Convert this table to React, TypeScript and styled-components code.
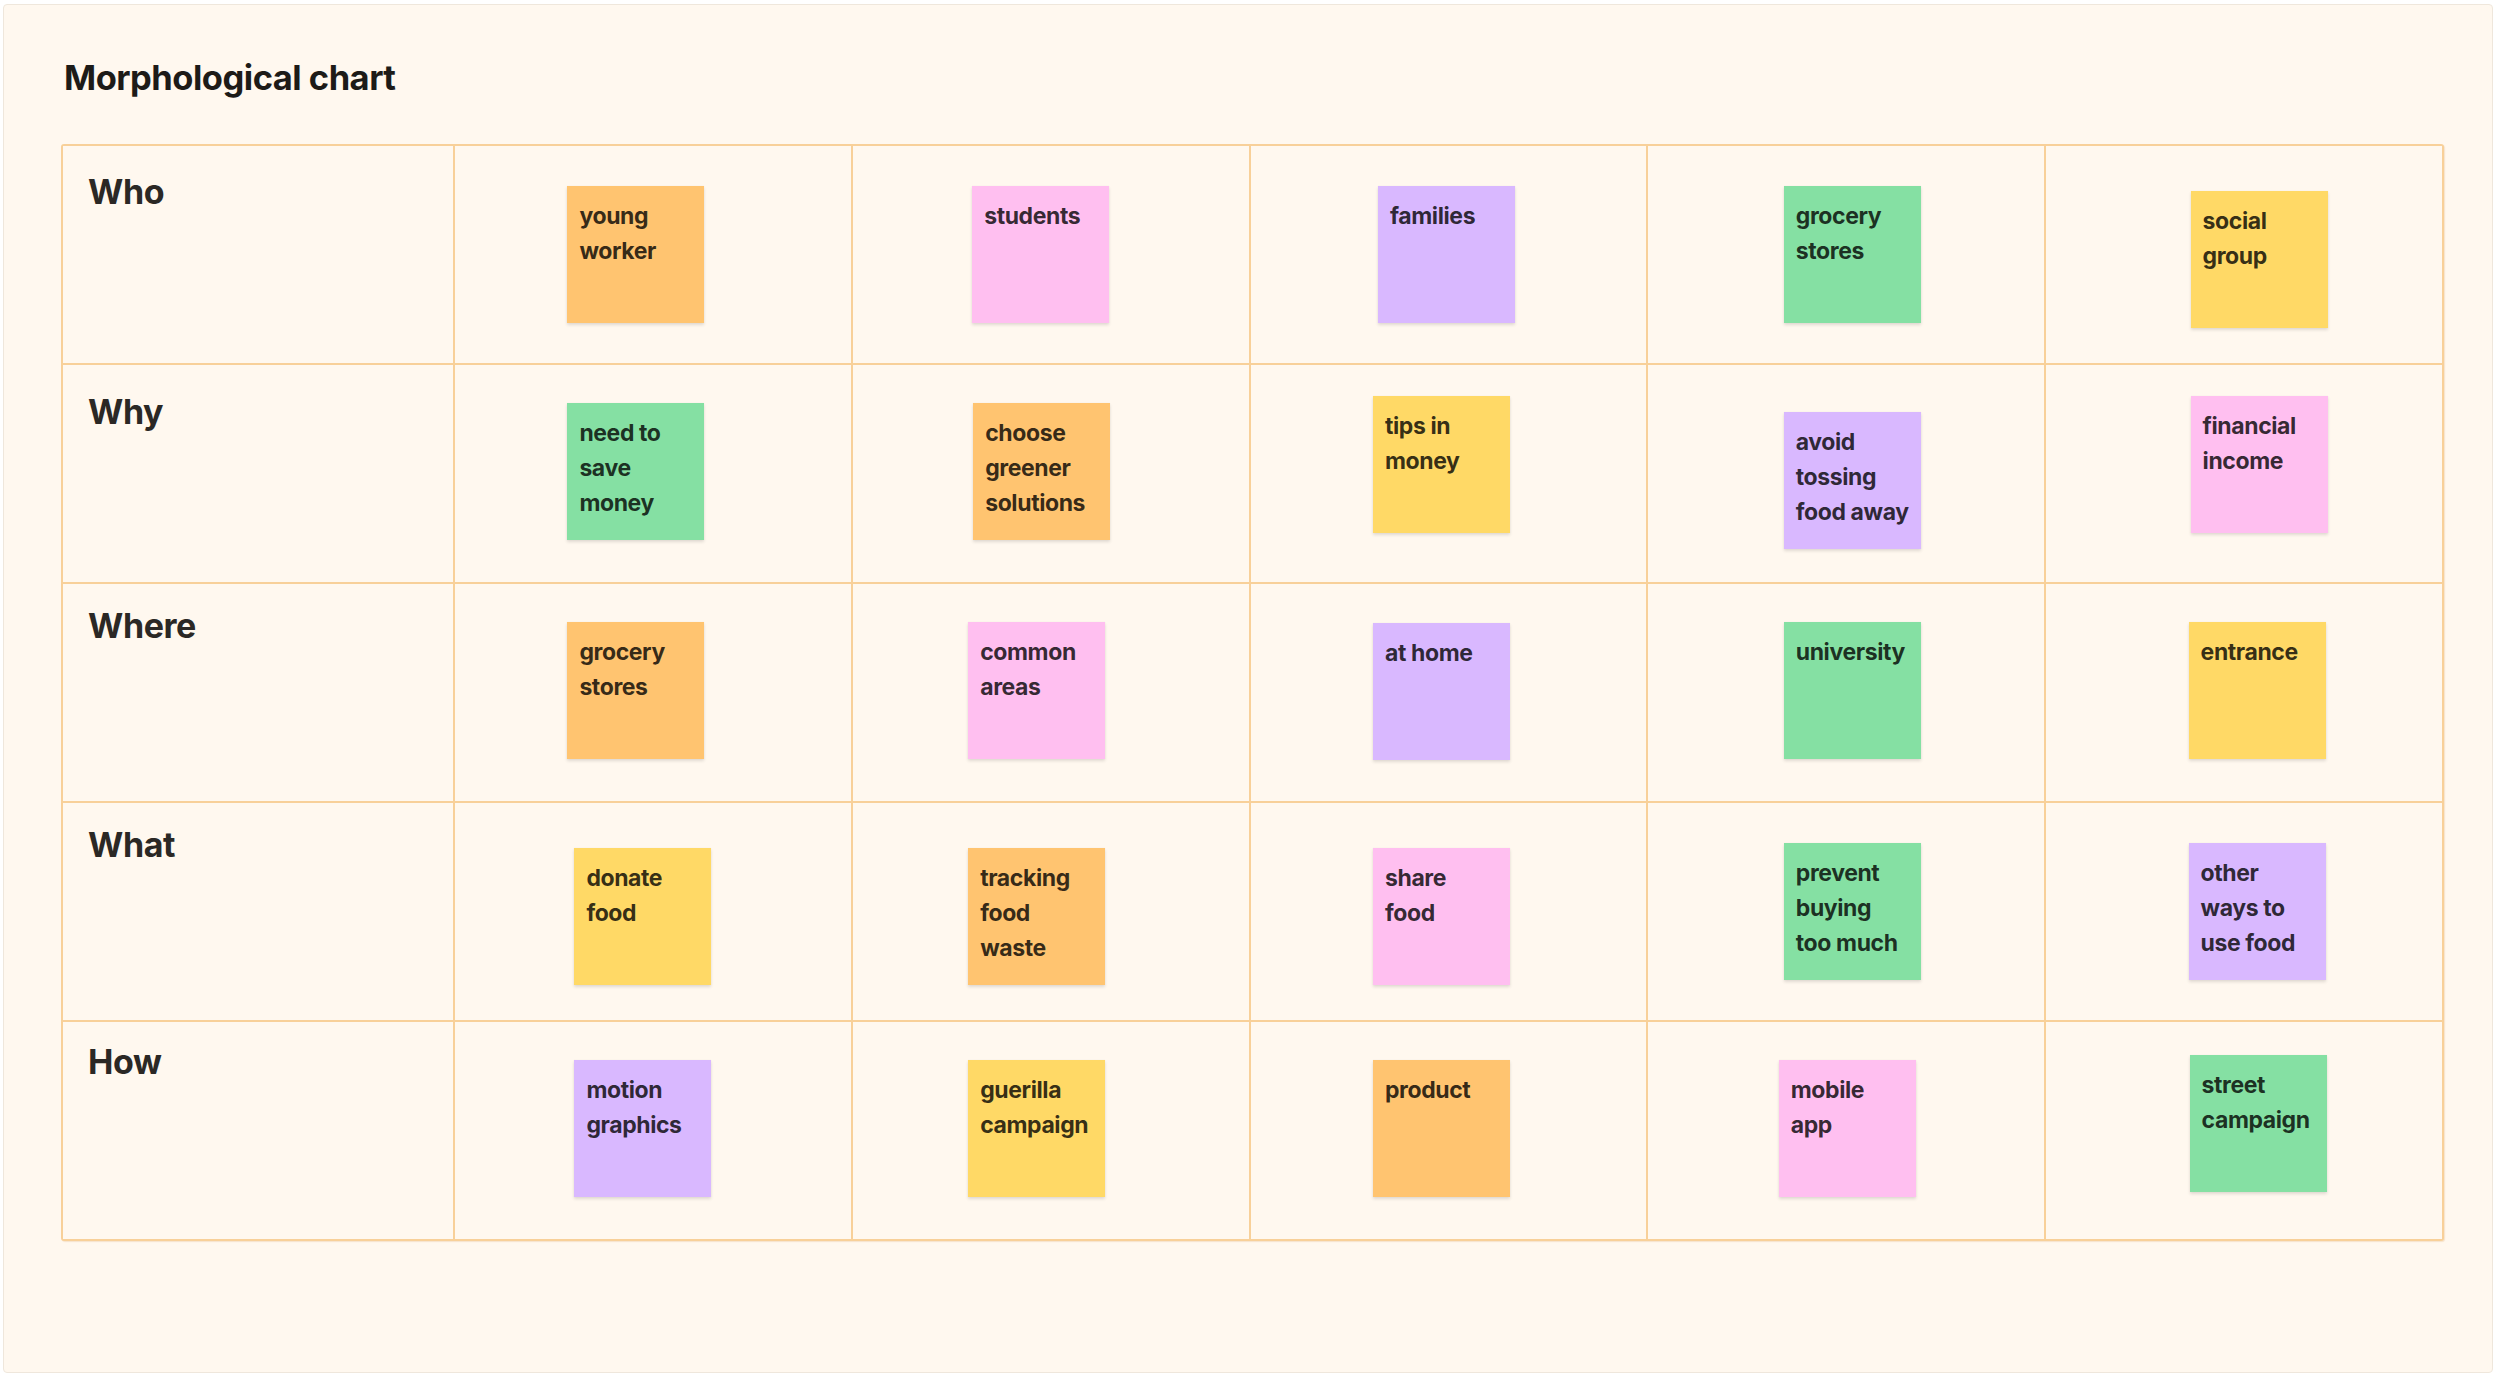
import React from "react";
import styled, { createGlobalStyle } from "styled-components";

const Global = createGlobalStyle`
  html, body { margin: 0; padding: 0; background: #ffffff; }
  body { font-family: Inter, "Noto Sans", "Liberation Sans", sans-serif; }
  * { box-sizing: border-box; }
`;

type Tone = "orange" | "pink" | "violet" | "green" | "yellow";

const toneBg: Record<Tone, string> = {
  orange: "#ffc470",
  pink: "#ffbff0",
  violet: "#d9b8ff",
  green: "#85e0a3",
  yellow: "#ffd966",
};

const Board = styled.div`
  margin: 4px 0 0 3px;
  width: 2490px;
  height: 1369px;
  border: 1px solid #efe7dc;
  border-radius: 4px;
  background: #fff8ef;
  padding: 52px 0 0 57px;
`;

const Title = styled.h1`
  margin: 0 0 0 3px;
  font-family: Inter, "Noto Sans", sans-serif;
  font-size: 34.5px;
  line-height: 41px;
  font-weight: 700;
  color: #1d1b18;
  letter-spacing: -0.5px;
`;

const Table = styled.div`
  margin-top: 46px;
  width: 2383px;
  height: 1097px;
  display: grid;
  grid-template-columns: 390px repeat(5, 1fr);
  grid-template-rows: repeat(5, 1fr);
  gap: 2px;
  background: #f8d099;
  border: 2px solid #f8d099;
  border-radius: 3px;
  box-shadow: 1px 1px 1px rgba(230, 190, 140, 0.35);
`;

const HeaderCell = styled.div<{ $top: number }>`
  background: #fff8ef;
  padding: ${(p) => p.$top}px 0 0 25px;
  font-family: Inter, "Noto Sans", sans-serif;
  font-size: 34px;
  line-height: 41px;
  font-weight: 700;
  color: #2b2825;
  letter-spacing: -0.4px;
`;

const Cell = styled.div`
  background: #fff8ef;
  display: flex;
  align-items: center;
  justify-content: center;
`;

const Sticky = styled.div<{ $tone: Tone; $dx: number; $dy: number }>`
  width: 137px;
  height: 137px;
  flex: none;
  background: ${(p) => toneBg[p.$tone]};
  transform: translate(${(p) => p.$dx}px, ${(p) => p.$dy}px);
  padding: 13px 6px 0 12px;
  font-family: Inter, "Noto Sans", sans-serif;
  font-size: 23px;
  line-height: 35px;
  font-weight: 700;
  letter-spacing: -0.4px;
  color: rgba(0, 0, 0, 0.8);
  white-space: pre-line;
  box-shadow: 0 2px 3px rgba(0, 0, 0, 0.12), 0 0 1px rgba(0, 0, 0, 0.06);
`;

type Note = { text: string; tone: Tone; dx: number; dy: number };
type Row = { label: string; top: number; notes: Note[] };

const rows: Row[] = [
  {
    label: "Who",
    top: 25,
    notes: [
      { text: "young\nworker", tone: "orange", dx: -17, dy: 0 },
      { text: "students", tone: "pink", dx: -10, dy: 0 },
      { text: "families", tone: "violet", dx: -2, dy: 0 },
      { text: "grocery\nstores", tone: "green", dx: 6, dy: 0 },
      { text: "social\ngroup", tone: "yellow", dx: 15, dy: 5 },
    ],
  },
  {
    label: "Why",
    top: 26,
    notes: [
      { text: "need to\nsave\nmoney", tone: "green", dx: -17, dy: -2 },
      { text: "choose\ngreener\nsolutions", tone: "orange", dx: -9, dy: -2 },
      { text: "tips in\nmoney", tone: "yellow", dx: -7, dy: -9 },
      { text: "avoid\ntossing\nfood away", tone: "violet", dx: 6, dy: 7 },
      { text: "financial\nincome", tone: "pink", dx: 15, dy: -9 },
    ],
  },
  {
    label: "Where",
    top: 21,
    notes: [
      { text: "grocery\nstores", tone: "orange", dx: -17, dy: -2 },
      { text: "common\nareas", tone: "pink", dx: -14, dy: -2 },
      { text: "at home", tone: "violet", dx: -7, dy: -1 },
      { text: "university", tone: "green", dx: 6, dy: -2 },
      { text: "entrance", tone: "yellow", dx: 13, dy: -2 },
    ],
  },
  {
    label: "What",
    top: 21,
    notes: [
      { text: "donate\nfood", tone: "yellow", dx: -10, dy: 5 },
      { text: "tracking\nfood\nwaste", tone: "orange", dx: -14, dy: 5 },
      { text: "share\nfood", tone: "pink", dx: -7, dy: 5 },
      { text: "prevent\nbuying\ntoo much", tone: "green", dx: 6, dy: 0 },
      { text: "other\nways to\nuse food", tone: "violet", dx: 13, dy: 0 },
    ],
  },
  {
    label: "How",
    top: 19,
    notes: [
      { text: "motion\ngraphics", tone: "violet", dx: -10, dy: -2 },
      { text: "guerilla\ncampaign", tone: "yellow", dx: -14, dy: -2 },
      { text: "product", tone: "orange", dx: -7, dy: -2 },
      { text: "mobile\napp", tone: "pink", dx: 1, dy: -2 },
      { text: "street\ncampaign", tone: "green", dx: 14, dy: -7 },
    ],
  },
];

export default function App() {
  return (
    <>
      <Global />
      <Board>
        <Title>Morphological chart</Title>
        <Table>
          {rows.map((row) => (
            <React.Fragment key={row.label}>
              <HeaderCell $top={row.top}>{row.label}</HeaderCell>
              {row.notes.map((n, i) => (
                <Cell key={i}>
                  <Sticky $tone={n.tone} $dx={n.dx} $dy={n.dy}>
                    {n.text}
                  </Sticky>
                </Cell>
              ))}
            </React.Fragment>
          ))}
        </Table>
      </Board>
    </>
  );
}
